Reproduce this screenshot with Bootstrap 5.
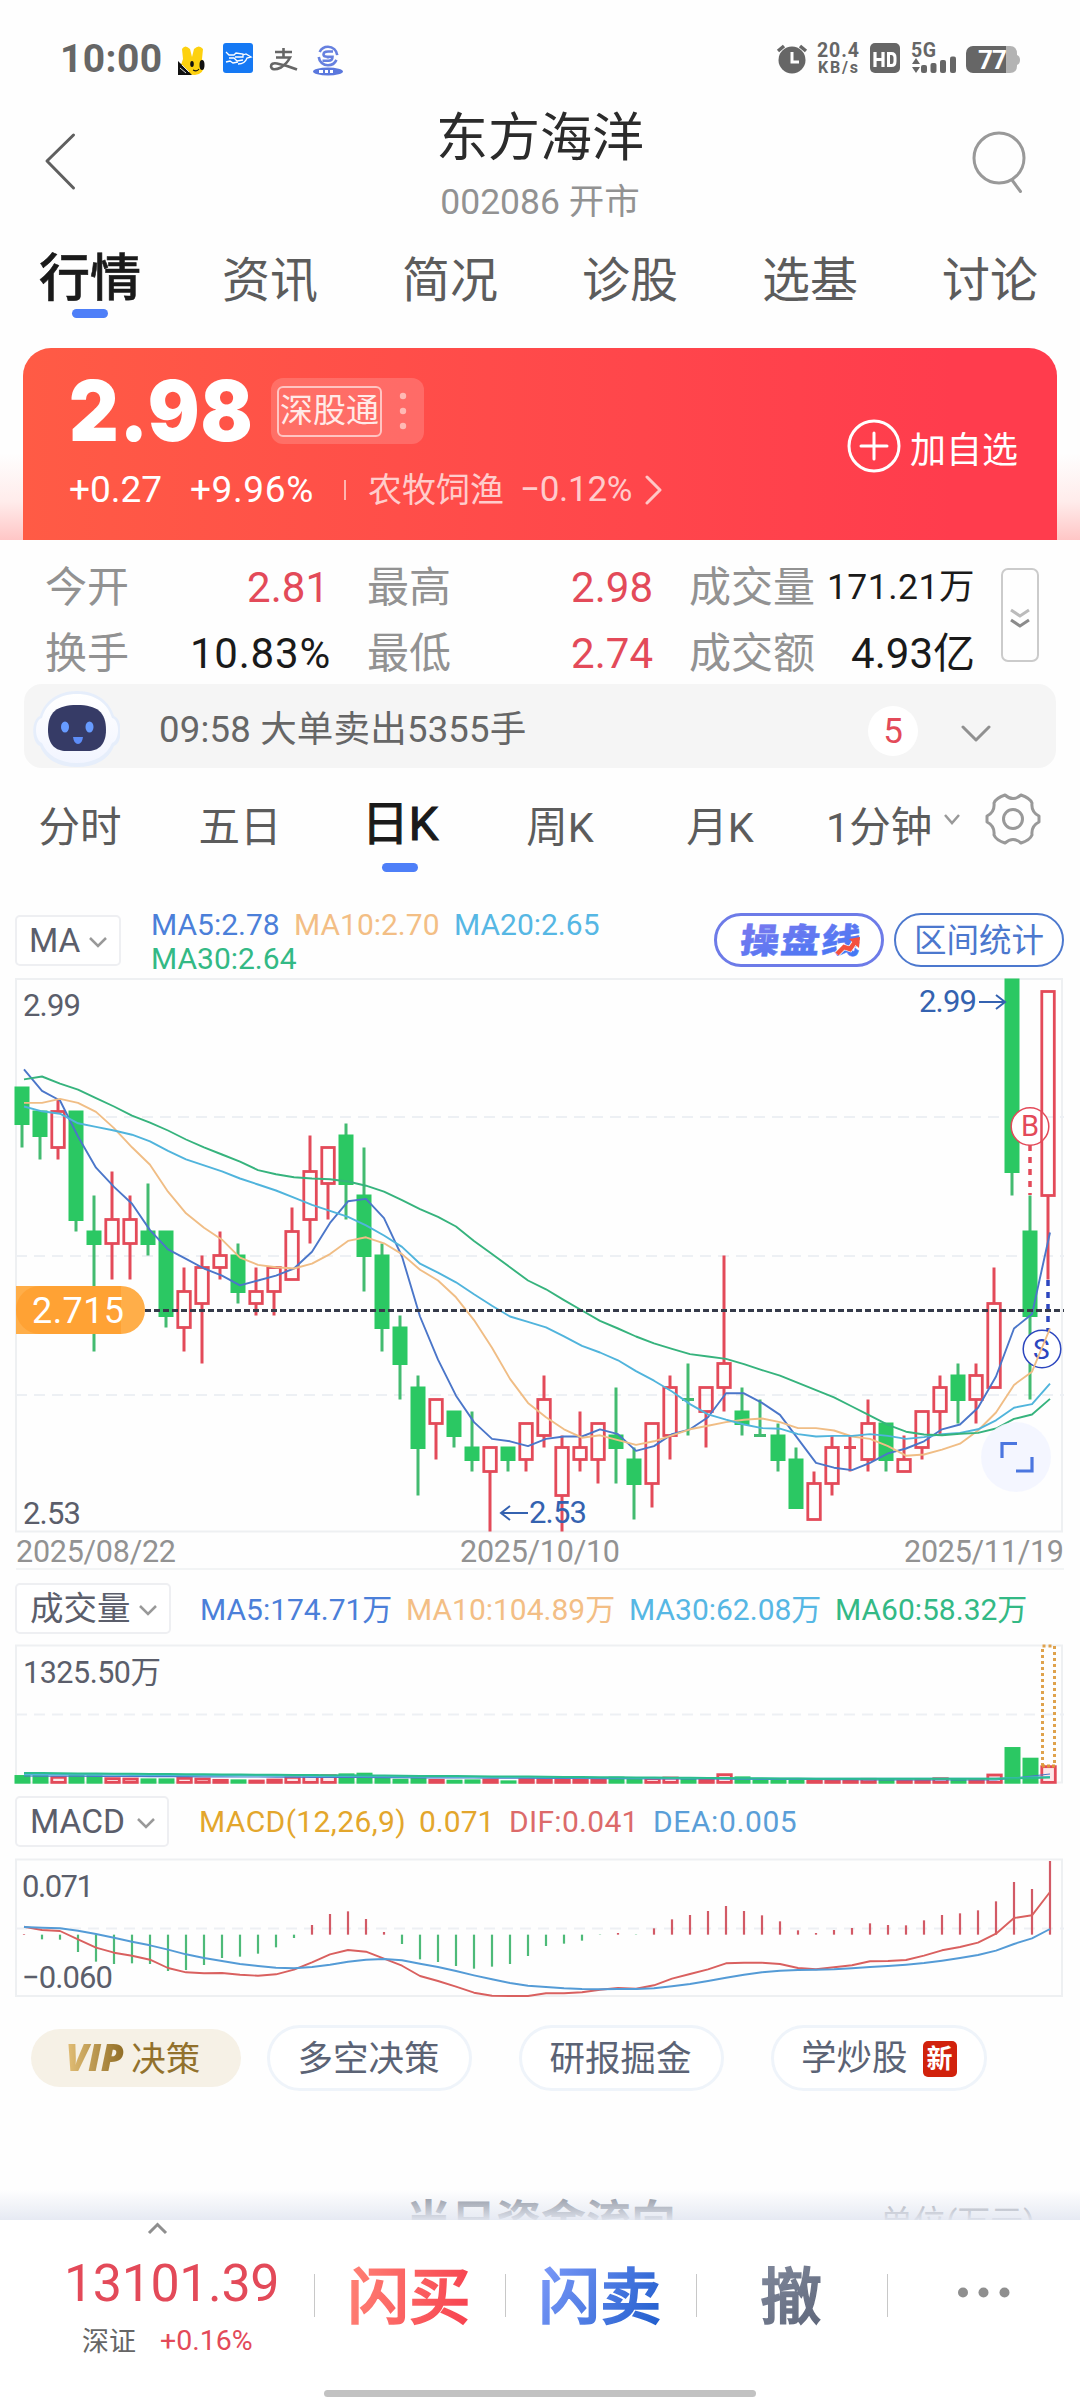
<!DOCTYPE html>
<html lang="zh-CN">
<head>
<meta charset="utf-8">
<meta name="viewport" content="width=device-width, initial-scale=1">
<title>东方海洋 002086</title>
<link href="https://cdn.jsdelivr.net/npm/bootstrap@5.3.0/dist/css/bootstrap.min.css" rel="stylesheet">
<style>
:root{--up:#e34a59;--ink:#5c5c5c;--slate:#5b5e6b;--blue:#4e7ff8}
body{width:1080px;height:2400px;overflow:hidden;background:#fefefe;font-family:Roboto,"Noto Sans CJK SC",sans-serif;color:#1a1a1a;line-height:1}
svg{display:block;flex:none}
svg text{font-family:Roboto,"Noto Sans CJK SC",sans-serif}
.statusbar{height:90px;padding:0 58px 0 60px}
.clock{font-size:39px;font-weight:700;color:#666;letter-spacing:.4px;width:107px;line-height:90px;padding-top:14px}
.head{height:145px;padding:0 40px}
.head h1{font-size:52px;font-weight:400;line-height:60px;margin:19px 0 0;color:#2b2b2b}
.code{font-size:35.500px;color:#929292;line-height:40px;margin-top:13px}
.maintabs{height:113px}
.maintabs .nav-link{width:180px;padding:0;font-size:48px;color:var(--ink);line-height:60px;padding-top:16px;text-align:center}
.maintabs .nav-link.active{font-size:51px;font-weight:500;color:#1a1a1a;-webkit-text-stroke:.6px #1a1a1a;padding-top:14px}
.tabmark{width:36px;height:9px;border-radius:5px;background:var(--blue)}
.glow{height:192px;padding:0 23px;background:linear-gradient(#fefefe 55%,#ffeceb 80%,#ffc6c6 100%)}
.pricecard{height:192px;border-radius:28px 28px 0 0;background:linear-gradient(90deg,#ff5b45,#ff4b4a 45%,#ff3c4d 90%);color:#fff;padding:0 39px 0 46px}
.bigprice{font-family:Inter,sans-serif;font-weight:900;font-size:84px;line-height:66px;width:202px;letter-spacing:1px;transform:scaleX(.915);transform-origin:0 0;margin-top:2px}
.tagbox{width:153px;height:66px;border-radius:12px;background:rgba(255,255,255,.17);padding:0 6px;margin-top:2px}
.tagbox span{width:105px;height:51px;border:2px solid rgba(255,255,255,.6);border-radius:6px;font-size:33px;line-height:46px;text-align:center;color:#ffeae8}
.subline{font-size:37px;line-height:44px}
.soft{color:rgba(255,255,255,.72)}
.quotes{height:144px;padding:14px 41px 0 45px;font-size:42px}
.quotes .qrow{height:66px;line-height:67px}
.qk{color:#929292}
.up{color:var(--up)}
.expander{width:38px;height:94px;border:2.5px solid #cbcbcb;border-radius:7px;margin-top:14px}
.notice{margin:0 24px;height:84px;border-radius:18px;background:#f5f5f5;color:#666;font-size:36.500px}
.count{width:50px;height:50px;border-radius:50%;background:#fff;font-size:35px;line-height:51px;text-align:center}
.periods{height:123px;color:var(--ink);font-size:41.500px}
.periods .pcell{width:160px;text-align:center;line-height:60px;padding-top:30px;height:123px}
.periods .pcell.on{font-size:47px;color:#1a1a1a;-webkit-text-stroke:1.2px #1a1a1a;padding-top:26px}
.picker{border:2.5px solid #eeeff2;border-radius:5px;height:51px;color:var(--slate);font-size:33.500px;background:#fff}
.legendtxt{font-size:30px;line-height:34px}
.c5{color:#4b7fd9}.c10{color:#f3be85}.c20{color:#56b7e4}.c30{color:#33b985}
.round{height:54px;width:170px;border-radius:27px;border:2.5px solid #4c78ce;color:#4c78ce;font-size:32.500px;line-height:52px;text-align:center;background:#fff}
.round.strong{border:3px solid #6d7be8;padding-top:1px}
.strong text{font-weight:900}
.pills{height:66px;padding:0 0 0 31px;font-size:35.500px;color:#5b6375}
.pillbtn{height:66px;border:3px solid #eff4fa;border-radius:33px;line-height:63px;text-align:center;background:#fff;padding-right:2px}
.vip{height:58px;width:210px;border-radius:29px;background:#f6f1e6;color:#92712c;font-size:34.500px;line-height:61px}
.vip b{font-family:"Open Sans",sans-serif;font-style:italic;font-weight:800;font-size:37px;line-height:56px;letter-spacing:-.5px;background:linear-gradient(90deg,#e6c27a,#8d6a22);-webkit-background-clip:text;color:transparent;padding:0 4px 0 2px;margin-left:-8px}
.newtag{width:34px;height:36px;border-radius:5px;background:#d1220c;color:#fff;font-size:26px;line-height:36px;font-weight:700;text-align:center}
.teaser{margin-top:99px;height:30px;overflow:hidden;position:relative}
.teaser::after{content:"";position:absolute;inset:0;background:linear-gradient(rgba(255,255,255,0),rgba(228,232,242,.92))}
.fund{font-size:45px;font-weight:700;color:#858b96;line-height:44px;margin:11px 0 0 406px;width:474px}
.unit{font-size:33px;color:#9a9da5;line-height:34px;margin-top:16px}
.dock{height:180px;background:#fff;color:var(--up)}
.indexbox{width:314px}
.dock .vbar{width:1px;height:43px;background:#c8c8c8;margin-top:54px}
.act{width:190px;text-align:center;font-size:61.500px;line-height:70px;padding-top:43px;position:relative;left:-1px}
.act span{font-weight:500;-webkit-background-clip:text;color:transparent;-webkit-text-stroke:1.6px transparent}
.buy span{background-image:linear-gradient(100deg,#ff8275,#f7404e)}
.sell span{background-image:linear-gradient(120deg,#7e9bfa,#1d5bcb)}
.undo span{background-image:linear-gradient(140deg,#828a9d,#5c6478)}
.homebar{position:absolute;left:324px;top:170px;width:432px;height:7px;border-radius:4px;background:#c2c2c2}
</style>
</head>
<body>
<header class="statusbar d-flex justify-content-between">
  <div class="d-flex">
    <div class="clock">10:00</div>
    <svg width="180" height="90" viewBox="167 0 180 90">
      <path d="M182 49q3-5 8 0l2 8 2-8q5-5 9 0l-1 10 2 6q0 9-9 10-13 0-14-10l2-6z" fill="#fdd10f"/>
      <path d="M178 61l14 14h-14z" fill="#111"/><path d="M180 68l6 5M182 65l7 7" stroke="#ddd" stroke-width="1"/>
      <ellipse cx="192" cy="64" rx="1.8" ry="3" fill="#111"/><ellipse cx="202" cy="65" rx="2.5" ry="5" fill="#111"/><path d="M193 70q4 2 6-1" stroke="#111" stroke-width="1.2" fill="none"/>
      <rect x="223" y="43" width="30" height="30" rx="3" fill="#1579f4"/>
      <path d="M226 52l3 3h5l2-2 7 1v3h-8M226 62l4-1 3 2 5-1M229 58h5l3 3 6-1M243 55l3-1 5 3-4 1q-2 6-9 6" stroke="#fff" stroke-width="1.3" fill="none"/>
      <path d="M275 52h17M283.500 48v9M276 57.500h14q-3 6-9 10-9 4-10-1 0-4 6-3 10 2 20 6" stroke="#666" stroke-width="2.600" fill="none"/>
      <g fill="none" stroke="#6680df" stroke-width="2.600"><circle cx="328" cy="56" r="9.300" stroke-dasharray="24 5.200" stroke-dashoffset="-4"/><path d="M333 51.500h-5q-4.500 0-4.500 3 0 2.200 4 2.200h5q0 4-4 4h-6M328 56.500v2"/></g>
      <ellipse cx="328" cy="71.500" rx="15" ry="4" fill="#5b78dd"/><path d="M319 71.500h4m2 0h3m2 0h3" stroke="#fff" stroke-width="3"/>
    </svg>
  </div>
  <svg width="250" height="90" viewBox="772 0 250 90" fill="#666">
    <circle cx="792" cy="60" r="13.500"/><path d="M778 51l6-5M806 51l-6-5" stroke="#666" stroke-width="3.500"/><path d="M792 52v10h7" stroke="#fff" stroke-width="3" fill="none"/>
    <text x="817" y="57" font-size="19.500" font-weight="700" textLength="42">20.4</text><text x="818" y="73" font-size="16" font-weight="700" textLength="40">KB/s</text>
    <rect x="870" y="43" width="30" height="30" rx="5"/><path d="M875 52v15M883 52v15M875 59.500h8" stroke="#fff" stroke-width="3.200"/><path d="M888.500 53.500h3q3.500 0 3.500 4v4q0 4-3.500 4h-3z" stroke="#fff" stroke-width="3" fill="none"/>
    <text x="911" y="57" font-size="19.500" font-weight="700" textLength="25">5G</text>
    <path d="M912 64l4-6 4 6zM912 67h8l-4 6z"/><rect x="921" y="65" width="6" height="8" rx="2"/><rect x="930.500" y="63" width="6" height="10" rx="2"/><rect x="940" y="60" width="6" height="13" rx="2"/><rect x="950" y="56.500" width="6" height="16.500" rx="2"/>
    <path d="M1006 46h4q7 0 7 8v1q3 1 3 5t-3 5v1q0 7-7 7h-4z" fill="#b3b3b3"/><rect x="966" y="46" width="40" height="27" rx="7"/><rect x="990" y="46" width="16" height="27"/>
    <text x="978" y="69" font-size="26" font-weight="700" fill="#fff" textLength="29">77</text>
  </svg>
</header>

<section class="head d-flex justify-content-between">
  <svg width="70" height="145" viewBox="40 90 70 145"><path d="M73.500 135L47 161l26.500 27" fill="none" stroke="#5f5f5f" stroke-width="3" stroke-linecap="round" stroke-linejoin="round"/></svg>
  <div class="text-center"><h1>东方海洋</h1><div class="code">002086 开市</div></div>
  <svg width="70" height="145" viewBox="970 90 70 145"><g fill="none" stroke="#999" stroke-width="3"><circle cx="999" cy="158" r="25"/><path d="M1012 180l8.500 11.500" stroke-linecap="round"/></g></svg>
</section>

<nav class="maintabs nav flex-nowrap">
  <a class="nav-link active d-flex flex-column align-items-center">行情<i class="tabmark"></i></a>
  <a class="nav-link">资讯</a><a class="nav-link">简况</a><a class="nav-link">诊股</a><a class="nav-link">选基</a><a class="nav-link">讨论</a>
</nav>

<div class="glow"><section class="pricecard d-flex justify-content-between">
  <div>
    <div class="d-flex" style="margin-top:28px"><div class="bigprice">2.98</div>
      <div class="tagbox d-flex align-items-center"><span>深股通</span><svg width="30" height="40" class="ms-1" fill="#ffb9b4"><circle cx="17" cy="5" r="3.200"/><circle cx="17" cy="20" r="3.200"/><circle cx="17" cy="35" r="3.200"/></svg></div>
    </div>
    <div class="subline d-flex align-items-center" style="margin-top:24px"><span style="width:121px">+0.27</span><span style="width:154px;letter-spacing:.6px">+9.96%</span><i style="width:2px;height:20px;background:#ffb5b0"></i>
      <span class="soft" style="font-size:34px;margin-left:22px;width:152px">农牧饲渔</span><span class="soft" style="font-size:35px;width:125px;letter-spacing:-.3px">−0.12%</span>
      <svg width="18" height="30" fill="none" stroke="#ffc7c6" stroke-width="3" stroke-linecap="round" stroke-linejoin="round"><path d="M2 2l13 13L2 28"/></svg></div>
  </div>
  <div class="d-flex align-items-center" style="font-size:36px;height:200px;gap:9px"><svg width="54" height="58" fill="none" stroke="#fff" stroke-width="3" stroke-linecap="round"><circle cx="27" cy="27" r="25"/><path d="M14 27h26M27 14v26"/></svg><span style="padding-top:5px">加自选</span></div>
</section></div>

<section class="quotes d-flex">
  <div style="width:286px"><div class="qrow d-flex justify-content-between"><span class="qk">今开</span><span class="up" style="margin-right:2px">2.81</span></div><div class="qrow d-flex justify-content-between"><span class="qk">换手</span><span style="letter-spacing:.8px">10.83%</span></div></div>
  <div style="width:286px;margin-left:36px"><div class="qrow d-flex justify-content-between"><span class="qk">最高</span><span class="up">2.98</span></div><div class="qrow d-flex justify-content-between"><span class="qk">最低</span><span class="up">2.74</span></div></div>
  <div style="width:286px;margin-left:36px"><div class="qrow d-flex justify-content-between"><span class="qk">成交量</span><span style="font-size:35.500px;letter-spacing:.5px">171.21万</span></div><div class="qrow d-flex justify-content-between"><span class="qk">成交额</span><span>4.93亿</span></div></div>
  <div class="expander ms-auto d-flex justify-content-center align-items-center"><svg width="22" height="22" fill="none" stroke-width="3" class="mt-2"><path d="M2 2l9 6 9-6" stroke="#bbb"/><path d="M2 12l9 6 9-6" stroke="#8b8b8b"/></svg></div>
</section>

<section class="notice d-flex align-items-center">
  <svg width="96" height="84" viewBox="24 684 96 84">
    <defs><linearGradient id="hel" x1="0" y1="0" x2="0" y2="1"><stop offset="0" stop-color="#fff"/><stop offset="1" stop-color="#f2f5ff"/></linearGradient></defs>
    <path d="M77 691c20 0 33 11 37 25 9 3 9 27 0 30-5 13-18 21-37 21s-32-8-37-21c-9-3-9-27 0-30 4-14 17-25 37-25z" fill="#e6eefb"/>
    <path d="M77 694c19 0 31 10 35 24 8 2 8 22 0 25-5 12-17 20-35 20s-30-8-35-20c-8-3-8-23 0-25 4-14 16-24 35-24z" fill="url(#hel)"/>
    <path d="M77 705c20 0 29 7 29 25 0 15-8 21-18 21H66c-10 0-18-6-18-21 0-18 9-25 29-25z" fill="#363b66"/>
    <ellipse cx="65" cy="727" rx="4" ry="5.500" fill="#679bff"/><ellipse cx="89.500" cy="727" rx="4" ry="5.500" fill="#679bff"/><path d="M73 737h10q-1 7-5 7t-5-7z" fill="#5d8df8"/>
  </svg>
  <span style="margin-left:39px;padding-top:9px;letter-spacing:.2px">09:58 大单卖出5355手</span>
  <span class="count up ms-auto" style="margin-top:10px">5</span>
  <svg width="30" height="18" style="margin:15px 65px 0 43px" fill="none" stroke="#909090" stroke-width="3" stroke-linecap="round" stroke-linejoin="round"><path d="M2 2l13 13L28 2"/></svg>
</section>

<nav class="periods d-flex">
  <div class="pcell">分时</div><div class="pcell">五日</div><div class="pcell on d-flex flex-column align-items-center">日K<i class="tabmark" style="margin-top:9px"></i></div><div class="pcell">周K</div><div class="pcell">月K</div>
  <div class="pcell d-flex" style="width:280px;padding-left:26px"><span style="width:110px;white-space:nowrap;text-align:left">1分钟</span>
    <svg width="16" height="12" style="margin:16px 0 0 8px" fill="none" stroke="#999" stroke-width="2.500"><path d="M1 1l7 8 7-8"/></svg>
    <svg width="58" height="56" viewBox="-29 -28 58 56" style="margin:-7px 0 0 24px" fill="none" stroke="#999" stroke-width="3"><path d="M-8 -24Q0 -17 8 -24Q17 -21 19 -16Q18 -7 26 -3V3Q18 7 19 16Q17 21 8 24Q0 17 -8 24Q-17 21 -19 16Q-18 7 -26 3V-3Q-18 -7 -19 -16Q-17 -21 -8 -24Z" stroke-linejoin="round"/><circle r="9.500"/></svg></div>
</nav>

<section class="d-flex align-items-start" style="height:87px;padding:22px 15px 0">
  <div class="picker d-flex align-items-center" style="width:106px;padding-left:12px;margin-top:2px">MA<svg class="ms-auto" width="18" height="12" style="margin-right:12px;margin-top:4px" fill="none" stroke="#999" stroke-width="2.500"><path d="M1 1l8 8 8-8"/></svg></div>
  <div class="legendtxt" style="width:563px;margin-left:30px;margin-top:-5px"><div class="d-flex"><span class="c5" style="width:143px">MA5:2.78</span><span class="c10" style="width:160px">MA10:2.70</span><span class="c20">MA20:2.65</span></div><div class="c30">MA30:2.64</div></div>
  <div class="round strong"><svg width="164" height="46" viewBox="0 0 164 46"><defs><linearGradient id="cpx" x1="0" y1="0" x2="1" y2="1"><stop offset="0" stop-color="#7f78ee"/><stop offset="1" stop-color="#3d78f5"/></linearGradient></defs><text x="0" y="0" transform="translate(22 36) skewX(-7) scale(1 .88)" font-size="39" textLength="120" fill="url(#cpx)" stroke="#5b7bf4" stroke-width=".5">操盘线</text><path d="M120 37l7-7 6 2 5-7" stroke="#fff" stroke-width="6" fill="none"/><path d="M120 37l7-7 6 2 5-7" stroke="#f4513f" stroke-width="4.500" fill="none"/><path d="M132 22l11-2-1 11z" fill="#f4513f"/></svg></div>
  <div class="round" style="margin-left:10px">区间统计</div>
</section>

<svg id="kline" width="1080" height="597" viewBox="0 978 1080 597"></svg>

<section class="d-flex align-items-start" style="height:68px;padding:8px 15px 0">
  <div class="picker d-flex align-items-center" style="width:156px;padding-left:13px">成交量<svg class="ms-auto" width="18" height="12" style="margin-right:12px;margin-top:4px" fill="none" stroke="#999" stroke-width="2.500"><path d="M1 1l8 8 8-8"/></svg></div>
  <div class="legendtxt d-flex" style="margin:10px 0 0 29px"><span class="c5" style="width:206px">MA5:174.71万</span><span class="c10" style="width:223px">MA10:104.89万</span><span class="c20" style="width:206px">MA30:62.08万</span><span class="c30">MA60:58.32万</span></div>
</section>
<svg id="volume" width="1080" height="147" viewBox="0 1643 1080 147"></svg>

<section class="d-flex align-items-start" style="height:67px;padding:6px 15px 0">
  <div class="picker d-flex align-items-center" style="width:154px;padding-left:13px">MACD<svg class="ms-auto" width="18" height="12" style="margin-right:12px;margin-top:4px" fill="none" stroke="#999" stroke-width="2.500"><path d="M1 1l8 8 8-8"/></svg></div>
  <div class="legendtxt d-flex" style="margin:9px 0 0 30px"><span style="width:220px;color:#e3a62c;letter-spacing:.4px">MACD(12,26,9)</span><span style="width:90px;color:#e3a62c">0.071</span><span style="width:144px;color:#dc6a6a;letter-spacing:.3px">DIF:0.041</span><span style="color:#5a9ed8;letter-spacing:.6px">DEA:0.005</span></div>
</section>
<svg id="macd" width="1080" height="145" viewBox="0 1857 1080 145"></svg>

<section class="pills d-flex align-items-center" style="margin-top:23px">
  <div class="vip d-flex justify-content-center"><b>VIP</b><span class="ms-1">决策</span></div>
  <div class="pillbtn" style="width:205px;margin-left:26px">多空决策</div>
  <div class="pillbtn" style="width:205px;margin-left:47px">研报掘金</div>
  <div class="pillbtn d-flex align-items-center" style="width:216px;margin-left:47px;padding-left:27px">学炒股<span class="newtag" style="margin-left:15px;margin-top:2px">新</span></div>
</section>

<section class="teaser d-flex"><div class="fund">当日资金流向</div><div class="unit">单位(万元)</div></section>

<footer class="dock d-flex position-relative">
  <div class="indexbox">
    <svg width="314" height="16" viewBox="0 2220 314 16"><path d="M149 2233l8.500-8.500 8.500 8.500" fill="none" stroke="#8f8f8f" stroke-width="3"/></svg>
    <div style="font-size:52px;line-height:60px;margin:18px 0 0 64px;letter-spacing:-.4px">13101.39</div>
    <div class="d-flex" style="font-size:27px;line-height:40px;margin:7px 0 0 82px"><span style="color:#666;width:78px;padding-top:1px">深证</span><span style="font-size:28.500px">+0.16%</span></div>
  </div>
  <div class="vbar"></div><div class="act buy"><span>闪买</span></div>
  <div class="vbar"></div><div class="act sell"><span>闪卖</span></div>
  <div class="vbar"></div><div class="act undo"><span>撤</span></div>
  <div class="vbar"></div>
  <svg width="190" height="90" viewBox="888 2220 190 90" fill="#8f8f8f"><circle cx="963" cy="2292.500" r="5"/><circle cx="983.500" cy="2292.500" r="5"/><circle cx="1004.500" cy="2292.500" r="5"/></svg>
  <div class="homebar"></div>
</footer>

<script src="https://cdn.jsdelivr.net/npm/bootstrap@5.3.0/dist/js/bootstrap.bundle.min.js"></script>
<script>
// Daily bars: direction, high, body top, body bottom, low, in cents below 2.99.
const bars = `G 9 9 12 14|G 11 11 13 15|R 10 11 14 15|G 11 11 20 21|G 18 21 22 31|R 16 20 22 25|R 18 20 22 25|G 17 21 22 23|G 21 21 28 29|R 24 26 29 31|R 23 24 27 32|R 21 23 24 25|G 22 23 26 27|R 24 26 27 28|R 24 24 26 28|R 19 21 25 25|R 13 16 20 22|R 14 14 17 20|G 12 13 17 20|G 14 18 23 26|G 22 23 29 31|G 28 29 32 35|G 33 34 39 43|R 35 35 37 40|G 36 36 38 39|G 36 39 40 41|R 39 39 41 46|G 39 39 40 41|R 37 37 40 41|R 33 35 38 39|R 38 39 43 46|R 36 39 40 41|R 37 37 40 42|G 34 38 39 42|G 39 40 42 45|R 37 37 42 44|R 33 34 38 40|G 32 35 35 38|R 34 34 36 39|R 23 32 34 36|G 34 36 37 38|G 35 38 38 38|G 37 38 40 41|G 39 40 44 44|R 41 42 45 45|R 38 39 42 43|R 38 39 39 41|R 35 37 40 41|G 37 37 40 41|R 38 40 41 41|R 36 36 39 40|R 33 34 36 38|G 32 33 35 37|R 32 33 35 37|R 24 27 34 34|G 0 0 16 18|G 18 21 28 35|R 1 1 18 25`.split('|').map(s => { const p = s.split(' '); return [p[0], ...p.slice(1).map(Number)]; });
const RED = '#e34a59', GREEN = '#2bc863', WICK = '#43bb70';
const cx = i => 22 + 18 * i, lx = i => 24 + 18 * i, py = u => 979.5 + 12 * u;
const line = (a, c, w = 1.9) => `<polyline points="${a.map((y, i) => lx(i) + ',' + y.toFixed(1)).join(' ')}" fill="none" stroke="${c}" stroke-width="${w}" stroke-linejoin="round"/>`;
const seg = (x1, y1, x2, y2, c, w, d = '') => `<line x1="${x1}" y1="${y1}" x2="${x2}" y2="${y2}" stroke="${c}" stroke-width="${w}" stroke-dasharray="${d}"/>`;
const txt = (x, y, s, c, f, w) => `<text x="${x}" y="${y}" fill="${c}" font-size="${f}" textLength="${w}">${s}</text>`;
const frame = (y, h) => `<rect x="16" y="${y}" width="1046" height="${h}" fill="none" stroke="#eef0f2" stroke-width="2"/>`;
const grid = y => seg(16, y, 1064, y, '#edf0f4', 2, '11 7');
const close = bars.map(b => b[0] === 'G' ? b[3] : b[2]);
const avg = (n, seed) => close.map((_, i) => i < n - 1 ? seed[i] : close.slice(i - n + 1, i + 1).reduce((a, b) => a + b) / n).map(u => py(u) + 1);

let k = frame(979, 552.5) + grid(1117) + grid(1256) + grid(1395);
bars.forEach(([d, h, t, b, l], i) => {
  const x = cx(i);
  if (t === b) { k += seg(x, py(h), x, py(l), d === 'G' ? WICK : RED, 3) + seg(x - 6, py(t), x + 6, py(t), d === 'G' ? WICK : RED, 3); return; }
  if (d === 'G') k += seg(x, py(h), x, py(l), WICK, 3) + `<rect x="${x - 7.5}" y="${py(t) - 1}" width="15" height="${12 * (b - t) + 2.5}" fill="${GREEN}"/>`;
  else k += seg(x, py(h), x, py(t), RED, 3) + seg(x, py(b), x, py(l), RED, 3) + `<rect x="${x - 6.2}" y="${py(t)}" width="12.5" height="${12 * (b - t)}" fill="none" stroke="${RED}" stroke-width="2.8"/>`;
});
// Trade markers
k += seg(1030, 1145, 1030, 1195, RED, 3.5, '6 6') + seg(1048, 1280, 1048, 1331, '#2c46bf', 3.5, '6 6')
  + `<circle cx="1030" cy="1126.500" r="18.800" fill="#fff" stroke="${RED}" stroke-width="1.5"/><circle cx="1042" cy="1349" r="18.800" fill="#fff" stroke="#2c46bf" stroke-width="1.5"/>`
  + seg(1041.5, 1112, 1041.5, 1142, RED, 2.5)
  + txt(1021, 1136, 'B', RED, 29, 19) + txt(1033, 1359, 'S', '#2c46bf', 28, 18);
const m5 = avg(5, [7.4, 9.2, 10, 13]);
const m10 = avg(10, [10.2, 10.2, 9.87, 10.2, 10.95, 12.3, 13.9, 15.35, 17.6]);
const m20 = avg(20, [10.5, 10.9, 11.1, 11.9, 12.2, 12.5, 12.85, 13.4, 14.2, 14.9, 15.4, 15.9, 16.5, 17, 17.5, 18.1, 18.7, 19.2, 19.7]);
const m30 = avg(30, [8.24, 8, 8.6, 9.1, 9.8, 10.5, 11.27, 11.85, 12.5, 13.25, 13.9, 14.5, 15.1, 15.8, 16.15, 16.4, 16.5, 16.57, 16.75, 17.1, 17.6, 18.3, 19.05, 19.7, 20.5, 21.7, 22.8, 23.9, 25]);
k += line(m5, '#4b76c9') + line(m10, '#f0bd85') + line(m20, '#50b4dc') + line(m30, '#36b37d');
k += seg(136, 1310.5, 1064, 1310.5, '#363b4a', 3, '6 3');
k += `<path d="M16 1286h105a24 24 0 0 1 0 48H16z" fill="#ffae49"/><path d="M40 1286h81v48H40a24 24 0 0 1 0-48z" fill="#ffa234"/>` + txt(32, 1323, '2.715', '#fff', 36, 92);
k += txt(23, 1015.5, '2.99', '#5b5e6b', 31, 58) + txt(23, 1523.500, '2.53', '#5b5e6b', 31, 58);
k += txt(919, 1012, '2.99', '#3462b0', 31, 58) + txt(529, 1523, '2.53', '#3462b0', 31, 58);
k += `<path d="M979 1002h26M996 995l9 7-9 7M528 1513h-26M510 1506l-9 7 9 7" fill="none" stroke="#3462b0" stroke-width="2"/>`;
k += txt(16, 1562, '2025/08/22', '#929292', 30.5, 160) + txt(460, 1562, '2025/10/10', '#929292', 30.5, 160) + txt(904, 1562, '2025/11/19', '#929292', 30.5, 160);
k += `<circle cx="1016" cy="1457" r="35" fill="#f2f5ff" opacity=".88"/><path d="M1002 1458v-14.500h15M1032 1457v14h-16" fill="none" stroke="#4b76df" stroke-width="3.200"/>`;
k += seg(16, 1569, 1064, 1569, '#eef0f2', 1.5);
document.getElementById('kline').innerHTML = k;

// Volume: bar heights in thirds of a pixel
const vol = [26,26,23,29,26,19,18,16,16,20,18,14,13,12,15,23,28,28,31,33,25,15,19,14,12,13,15,10,16,16,14,16,14,21,14,19,21,17,15,31,22,13,16,16,12,14,12,17,14,12,16,19,16,16,30,110,78,55];
let v = frame(1645.5, 137) + grid(1714.5);
vol.forEach((n, i) => {
  const h = n / 3, x = cx(i) + .5;
  v += bars[i][0] === 'G' ? `<rect x="${x - 8}" y="${1783.7 - h}" width="16" height="${h}" fill="${GREEN}"/>`
    : `<rect x="${x - 6.7}" y="${1785 - h}" width="13.5" height="${Math.max(h - 2.6, 1)}" fill="#fde6e8" stroke="${RED}" stroke-width="2.8"/>`;
});
v += line(vol.map((_, i) => 1776 + Math.min(i, 50) * .08 - (i > 54 ? (i - 54) * 2 : 0)), '#4b76c9', 1.2);
v += line(vol.map((_, i) => 1774.5 + Math.min(i, 40) * .1 - (i > 54 ? (i - 54) * .6 : 0)), '#50b4dc', 1.6) + line(vol.map((_, i) => 1773 + Math.min(i, 44) * .13 - (i > 54 ? (i - 54) * .4 : 0)), '#2bbd8e', 2);
v += `<path d="M1042.500 1766V1646h12v120" fill="none" stroke="#dfa24c" stroke-width="3" stroke-dasharray="3 3"/><path d="M1042 1766h13" stroke="#e09338" stroke-width="3" stroke-dasharray="3 2"/>`;
v += txt(23, 1683, '1325.50万', '#5b5e6b', 30.5, 138);
document.getElementById('volume').innerHTML = v;

// MACD series, in thirds of a pixel from the panel origin at 1560
const q = y => 1560 + y / 3;
const hist = [1122,1138,1139,1176,1205,1212,1210,1212,1233,1230,1215,1194,1190,1181,1162,1134,1095,1062,1054,1077,1116,1152,1198,1206,1218,1226,1220,1212,1188,1158,1151,1142,1125,1119,1125,1105,1078,1065,1053,1038,1053,1066,1084,1111,1119,1110,1104,1090,1095,1096,1081,1065,1060,1051,1024,966,987,903];
const dif = [1100,1110,1113,1138,1163,1178,1187,1199,1224,1237,1240,1239,1244,1247,1243,1229,1207,1183,1170,1175,1196,1217,1248,1263,1280,1298,1307,1308,1308,1300,1300,1297,1289,1284,1286,1276,1256,1242,1228,1210,1208,1208,1212,1224,1228,1222,1216,1204,1203,1200,1187,1171,1161,1148,1121,1074,1066,996];
const dea = [1101,1103,1105,1112,1122,1133,1145,1156,1169,1183,1194,1203,1212,1218,1223,1225,1221,1214,1205,1199,1197,1201,1211,1221,1233,1246,1258,1269,1277,1281,1285,1287,1288,1287,1287,1285,1279,1272,1263,1253,1244,1237,1232,1230,1229,1228,1225,1221,1218,1214,1209,1202,1194,1185,1172,1152,1135,1107];
let m = frame(1859.5, 136.5) + grid(1928.5);
m += txt(22, 1897, '0.071', '#5b5e6b', 31, 72) + txt(22, 1988, '−0.060', '#5b5e6b', 31, 91);
hist.forEach((y, i) => m += seg(lx(i), q(1124), lx(i), q(y), y < 1124 ? '#d25a66' : '#4dba78', 2.2));
m += line(dif.map(q), '#d9605f') + line(dea.map(q), '#549bd6');
document.getElementById('macd').innerHTML = m;
</script>
</body>
</html>
